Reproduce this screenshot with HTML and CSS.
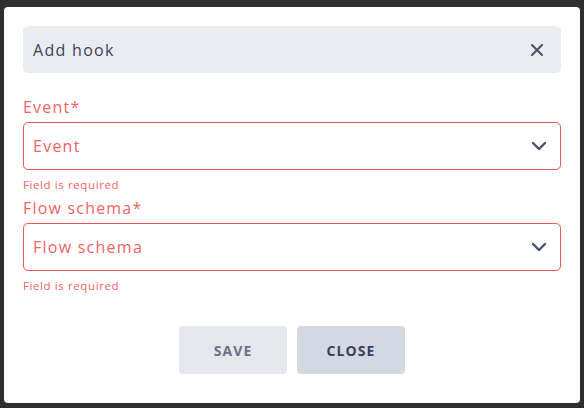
FILE: index.html
```html
<!DOCTYPE html>
<html>
<head>
<meta charset="utf-8">
<link rel="stylesheet" href="styles.css">
</head>
<body>
<div class="modal">
  <div class="modal-header">
    <span class="modal-title">Add hook</span>
    <button class="icon-btn" aria-label="Close">
      <svg width="12" height="12" viewBox="0 0 12 12"><path d="M1 1L11 11M11 1L1 11" stroke="#4a5068" stroke-width="2" stroke-linecap="round"/></svg>
    </button>
  </div>
  <div class="form">
    <div class="field">
      <label class="field-label">Event*</label>
      <div class="select">
        <span class="placeholder">Event</span>
        <svg class="chevron" width="16" height="10" viewBox="0 0 16 10"><path d="M2 2L8 8L14 2" fill="none" stroke="#4a5068" stroke-width="2.4" stroke-linecap="round" stroke-linejoin="round"/></svg>
      </div>
      <div class="field-error">Field is required</div>
    </div>
    <div class="field">
      <label class="field-label">Flow schema*</label>
      <div class="select">
        <span class="placeholder">Flow schema</span>
        <svg class="chevron" width="16" height="10" viewBox="0 0 16 10"><path d="M2 2L8 8L14 2" fill="none" stroke="#4a5068" stroke-width="2.4" stroke-linecap="round" stroke-linejoin="round"/></svg>
      </div>
      <div class="field-error">Field is required</div>
    </div>
  </div>
  <div class="actions">
    <button class="btn btn-save">SAVE</button>
    <button class="btn btn-close">CLOSE</button>
  </div>
</div>
</body>
</html>
```
FILE: styles.css
```css
html, body {
  margin: 0;
  height: 100%;
}
body {
  background: #2e2e2e;
  padding: 7px 4px 5px 4px;
  box-sizing: border-box;
  font-family: "Open Sans", "DejaVu Sans", sans-serif;
}
.modal {
  background: #ffffff;
  border-radius: 4px;
  height: 396px;
  box-sizing: border-box;
  padding: 19px 19px 0 19px;
  display: flex;
  flex-direction: column;
}
.modal-header {
  height: 47px;
  background: #ebecf1;
  border-radius: 5px;
  display: flex;
  align-items: center;
  justify-content: space-between;
  padding: 0 18px 0 10px;
}
.modal-title {
  font-size: 16px;
  color: #3b4159;
  letter-spacing: 1.3px;
  font-weight: 500;
}
.icon-btn {
  border: 0;
  background: none;
  padding: 0;
  width: 12px;
  height: 12px;
  display: flex;
}
.form {
  margin-top: 24px;
  display: flex;
  flex-direction: column;
  gap: 6px;
}
.field {
  display: flex;
  flex-direction: column;
}
.field-label {
  font-size: 16px;
  line-height: 20px;
  height: 20px;
  color: #f16464;
  margin-bottom: 5px;
  letter-spacing: 1.2px;
}
.select {
  height: 48px;
  box-sizing: border-box;
  border: 1px solid #ef5656;
  border-radius: 5px;
  display: flex;
  align-items: center;
  justify-content: space-between;
  padding: 0 13px 0 9px;
}
.placeholder {
  font-size: 16px;
  color: #f16464;
  letter-spacing: 1.25px;
}
.field-error {
  margin-top: 8px;
  font-size: 11.5px;
  line-height: 14px;
  color: #f16464;
  letter-spacing: 0.6px;
}
.actions {
  margin-top: 33px;
  display: flex;
  justify-content: center;
  gap: 10px;
}
.btn {
  width: 108px;
  height: 48px;
  border: 0;
  border-radius: 4px;
  font-family: inherit;
  font-size: 14px;
  font-weight: 700;
  letter-spacing: 1.1px;
}
.btn-save {
  background: #e6e7ee;
  color: #6b7185;
}
.btn-close {
  background: #d4d8e2;
  color: #3b4159;
}
```
